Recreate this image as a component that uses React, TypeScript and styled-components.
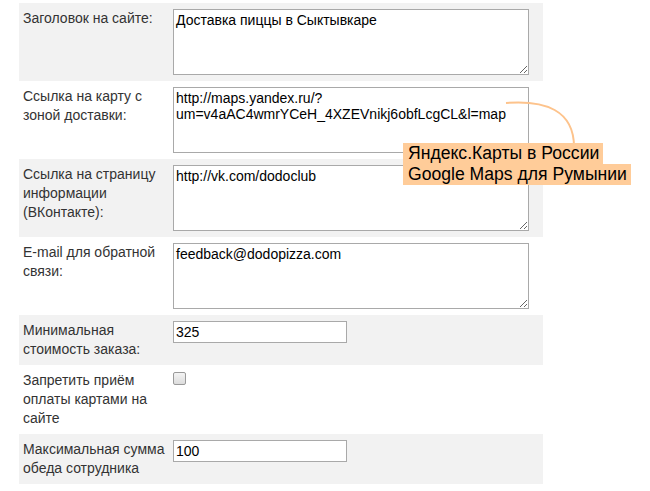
import React from "react";
import styled, { createGlobalStyle } from "styled-components";

const Global = createGlobalStyle`
  html, body { margin: 0; padding: 0; background: #fff; }
  body { font-family: "Liberation Sans", Arial, sans-serif; font-size: 14px; color: #333; }
`;

const Page = styled.div`
  position: relative;
  padding: 3px 0 0 19px;
  width: 524px;
`;

const Row = styled.div<{ $shade: boolean }>`
  display: grid;
  grid-template-columns: 150px 1fr;
  align-items: start;
  padding: 6px 4px;
  background: ${(p) => (p.$shade ? "#f2f2f2" : "#ffffff")};
`;

const Label = styled.label`
  font-size: 14px;
  line-height: 19px;
  color: #333;
  padding-right: 2px;
`;

const Area = styled.textarea`
  display: block;
  box-sizing: border-box;
  width: 356px;
  height: 66px;
  margin: 0;
  padding: 2px;
  border: 1px solid #a9a9a9;
  font-family: "Liberation Sans", Arial, sans-serif;
  font-size: 14px;
  line-height: 16px;
  color: #000;
  background: #fff;
  resize: both;
  outline: none;
`;

const Field = styled.input`
  display: block;
  box-sizing: border-box;
  width: 174px;
  height: 22px;
  margin: 0;
  padding: 1px 2px;
  border: 1px solid #a9a9a9;
  font-family: "Liberation Sans", Arial, sans-serif;
  font-size: 14px;
  color: #000;
  background: #fff;
  outline: none;
`;

const Check = styled.input`
  appearance: none;
  -webkit-appearance: none;
  display: block;
  width: 13px;
  height: 13px;
  margin: 1px 0 0 0;
  border: 1px solid #9a9a9a;
  border-radius: 2px;
  background: linear-gradient(#f4f4f4, #dcdcdc);
  box-sizing: border-box;
`;

const Curve = styled.svg`
  position: absolute;
  left: 500px;
  top: 95px;
  overflow: visible;
`;

const Callout = styled.div`
  position: absolute;
  left: 403px;
  top: 143px;
  display: flex;
  flex-direction: column;
  align-items: flex-start;
`;

const CalloutLine = styled.span`
  display: block;
  background: #ffcc99;
  color: #000;
  font-family: "Liberation Sans", Arial, sans-serif;
  font-size: 17.6px;
  line-height: 21px;
  padding: 0 4px 0 5px;
  white-space: nowrap;
`;

type Item =
  | { label: string; kind: "area"; value: string }
  | { label: string; kind: "input"; value: string }
  | { label: string; kind: "check" };

const items: Item[] = [
  { label: "Заголовок на сайте:", kind: "area", value: "Доставка пиццы в Сыктывкаре" },
  {
    label: "Ссылка на карту с зоной доставки:",
    kind: "area",
    value: "http://maps.yandex.ru/?\num=v4aAC4wmrYCeH_4XZEVnikj6obfLcgCL&l=map",
  },
  { label: "Ссылка на страницу информации (ВКонтакте):", kind: "area", value: "http://vk.com/dodoclub" },
  { label: "E-mail для обратной связи:", kind: "area", value: "feedback@dodopizza.com" },
  { label: "Минимальная стоимость заказа:", kind: "input", value: "325" },
  { label: "Запретить приём оплаты картами на сайте", kind: "check" },
  { label: "Максимальная сумма обеда сотрудника", kind: "input", value: "100" },
];

export default function App() {
  return (
    <Page>
      <Global />
      {items.map((it, i) => (
        <Row key={i} $shade={i % 2 === 0}>
          <Label>{it.label}</Label>
          {it.kind === "area" && <Area defaultValue={it.value} spellCheck={false} />}
          {it.kind === "input" && <Field type="text" defaultValue={it.value} />}
          {it.kind === "check" && <Check type="checkbox" />}
        </Row>
      ))}
      <Curve width="80" height="52" viewBox="0 0 80 52">
        <path d="M6 8 C45 5, 74 15, 74 52" fill="none" stroke="#fdc38c" strokeWidth="2" />
      </Curve>
      <Callout>
        <CalloutLine>Яндекс.Карты в России</CalloutLine>
        <CalloutLine>Google Maps для Румынии</CalloutLine>
      </Callout>
    </Page>
  );
}
